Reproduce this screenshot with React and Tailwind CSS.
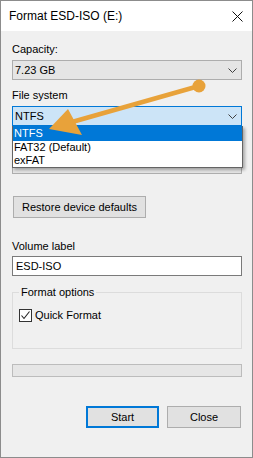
import React from 'react';

const Chevron = () => (
  <svg width="9" height="5" viewBox="0 0 9 5" className="shrink-0">
    <path d="M0.5 0.5 L4.5 4.5 L8.5 0.5" fill="none" stroke="#404040" strokeWidth="1" />
  </svg>
);

const Combo = ({ value, active }) => (
  <div
    className={`h-[20px] flex items-center justify-between pl-[2px] pr-[4px] border ${
      active ? 'bg-[#cce4f7] border-[#0078d7]' : 'bg-[#e5e5e5] border-[#adadad]'
    }`}
  >
    <span>{value}</span>
    <Chevron />
  </div>
);

const App = () => {
  return (
    <div className="w-[253px] h-[458px] relative overflow-hidden bg-[#f0f0f0] border border-[#8c8c8c] flex flex-col text-[11px] leading-[15px] text-black font-['Liberation_Sans',Arial,sans-serif]">
      {/* title bar */}
      <div className="h-[30px] bg-white flex items-center justify-between pl-[8px] pr-[9px]">
        <span className="text-[12px]">Format ESD-ISO (E:)</span>
        <svg width="11" height="11" viewBox="0 0 11 11">
          <path d="M0.5 0.5 L10.5 10.5 M10.5 0.5 L0.5 10.5" stroke="#111" strokeWidth="1" />
        </svg>
      </div>

      <div className="flex-1 flex flex-col pl-[11px] pr-[10px]">
        <div className="mt-[11px]">Capacity:</div>
        <div className="mt-[3px]">
          <Combo value="7.23 GB" />
        </div>

        <div className="mt-[8px]">File system</div>
        <div className="mt-[3px] relative z-10">
          <Combo value="NTFS" active />
          {/* open dropdown list */}
          <div className="absolute left-0 top-full w-[231px] bg-white border-x border-b border-[#646464] shadow-[2px_2px_3px_rgba(0,0,0,0.3)]">
            <div className="h-[15px] flex items-center pl-[1px] bg-[#0078d7] text-white">NTFS</div>
            <div className="h-[13px] flex items-center pl-[1px]">FAT32 (Default)</div>
            <div className="h-[13px] flex items-center pl-[1px]">exFAT</div>
          </div>
        </div>

        {/* allocation unit row, hidden behind the open list */}
        <div className="mt-[10px] h-[15px]" />
        <div className="mt-[3px]">
          <Combo value="" />
        </div>

        <button className="mt-[22px] ml-[1px] w-[133px] h-[22px] bg-[#e1e1e1] border border-[#adadad] text-left pl-[8px]">
          Restore device defaults
        </button>

        <div className="mt-[21px]">Volume label</div>
        <div className="mt-[2px] h-[20px] bg-white border border-[#7a7a7a] flex items-center pl-[3px]">ESD-ISO</div>

        <div className="mt-[16px] h-[57px] relative border border-[#dcdcdc] pt-[15px] pl-[6px]">
          <span className="absolute left-[6px] top-[-8px] px-[2px] bg-[#f0f0f0]">Format options</span>
          <div className="flex items-center gap-[3px]">
            <div className="w-[13px] h-[13px] bg-white border border-[#333] flex items-center justify-center">
              <svg width="11" height="11" viewBox="0 0 11 11">
                <path d="M1.5 5.5 L4 8.5 L9.5 1.5" fill="none" stroke="#222" strokeWidth="1.1" />
              </svg>
            </div>
            <span>Quick Format</span>
          </div>
        </div>

        <div className="mt-[15px] h-[13px] bg-[#e6e6e6] border border-[#bcbcbc]" />

        <div className="mt-[29px] flex justify-end gap-[8px] mr-[1px]">
          <button className="w-[73px] h-[22px] bg-[#e1e1e1] border-2 border-[#0078d7]">Start</button>
          <button className="w-[74px] h-[22px] bg-[#e1e1e1] border border-[#adadad]">Close</button>
        </div>
      </div>

      {/* annotation arrow */}
      <svg className="absolute left-[-1px] top-[-1px] z-20 pointer-events-none" width="253" height="458" viewBox="0 0 253 458">
        <line x1="199" y1="86" x2="72" y2="122" stroke="#e8a23a" strokeWidth="4.5" strokeLinecap="round" />
        <polygon points="49,129 68,109 82,135" fill="#e8a23a" />
        <circle cx="199" cy="86" r="6.5" fill="#e8a23a" />
      </svg>
    </div>
  );
};

export default App;
